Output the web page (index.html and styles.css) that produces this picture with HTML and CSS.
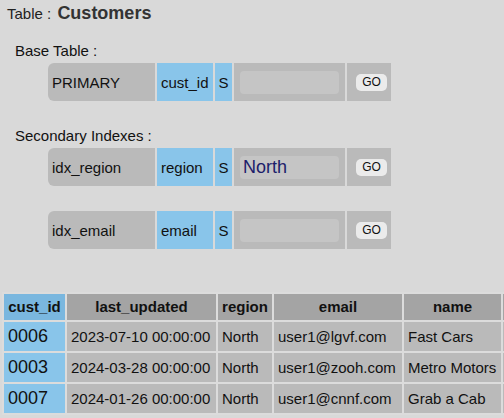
FILE: index.html
```html
<!DOCTYPE html>
<html>
<head>
<meta charset="utf-8">
<link rel="stylesheet" href="styles.css">
</head>
<body>
<div class="title">Table : <b class="tname">Customers</b></div>

<div class="label label-base">Base Table :</div>
<div class="idx-row first">
  <div class="c-name">PRIMARY</div>
  <div class="c-key">cust_id</div>
  <div class="c-type">S</div>
  <div class="c-input"><input class="field" type="text" value=""></div>
  <div class="c-go"><button class="go">GO</button></div>
</div>

<div class="label label-sec">Secondary Indexes :</div>
<div class="idx-row first">
  <div class="c-name">idx_region</div>
  <div class="c-key">region</div>
  <div class="c-type">S</div>
  <div class="c-input"><input class="field" type="text" value="North"></div>
  <div class="c-go"><button class="go">GO</button></div>
</div>
<div class="idx-row second">
  <div class="c-name">idx_email</div>
  <div class="c-key">email</div>
  <div class="c-type">S</div>
  <div class="c-input"><input class="field" type="text" value=""></div>
  <div class="c-go"><button class="go">GO</button></div>
</div>

<div class="grid-wrap">
<table class="grid">
  <thead>
    <tr>
      <th class="k w-id">cust_id</th>
      <th class="w-date">last_updated</th>
      <th class="w-region">region</th>
      <th class="w-email">email</th>
      <th class="w-name">name</th>
      <th class="w-extra"></th>
    </tr>
  </thead>
  <tbody>
    <tr>
      <td class="k">0006</td>
      <td class="d">2023-07-10 00:00:00</td>
      <td>North</td>
      <td>user1@lgvf.com</td>
      <td>Fast Cars</td>
      <td></td>
    </tr>
    <tr>
      <td class="k">0003</td>
      <td class="d">2024-03-28 00:00:00</td>
      <td>North</td>
      <td>user1@zooh.com</td>
      <td>Metro Motors</td>
      <td></td>
    </tr>
    <tr>
      <td class="k">0007</td>
      <td class="d">2024-01-26 00:00:00</td>
      <td>North</td>
      <td>user1@cnnf.com</td>
      <td>Grab a Cab</td>
      <td></td>
    </tr>
  </tbody>
</table>
</div>
</body>
</html>
```

FILE: styles.css
```css
html, body {
  margin: 0;
  padding: 0;
  background: #d9d9d9;
  overflow: hidden;
}

body {
  font-family: "Liberation Sans", Arial, sans-serif;
  font-size: 15px;
  color: #111;
}

.title {
  padding: 2px 0 0 7px;
  line-height: 22px;
  font-size: 15px;
  color: #222;
}

.tname {
  font-size: 18px;
  margin-left: 2px;
  color: #333;
}

.label {
  padding-left: 15px;
  line-height: 18px;
  height: 18px;
}

.label-base {
  margin-top: 17px;
}

.label-sec {
  margin-top: 26px;
}

.idx-row {
  display: flex;
  gap: 2px;
  height: 38px;
  margin-left: 48px;
  margin-top: 3px;
}

.idx-row.second {
  margin-top: 25px;
}

.idx-row > div {
  display: flex;
  align-items: center;
  box-sizing: border-box;
}

.c-name {
  width: 107px;
  background: #bababa;
  border-radius: 6px 0 0 6px;
  padding-left: 4px;
}

.c-key {
  width: 56px;
  background: #89c5ea;
  padding-left: 4px;
}

.c-type {
  width: 17px;
  background: #89c5ea;
  justify-content: center;
}

.c-input {
  width: 111px;
  background: #bababa;
  padding-left: 6px;
}

.field {
  width: 99px;
  height: 23px;
  box-sizing: border-box;
  border: 0;
  border-radius: 4px;
  background: #c5c5c5;
  padding: 0 3px;
  margin: 0;
  font-family: "Liberation Sans", Arial, sans-serif;
  font-size: 18px;
  color: #1d1d6b;
  outline: none;
}

.c-go {
  width: 44px;
  background: #bababa;
  padding-left: 9px;
}

.go {
  width: 31px;
  height: 17px;
  padding: 0;
  margin: 0;
  border: 0;
  border-radius: 5px;
  background: #ebebeb;
  font-family: "Liberation Sans", Arial, sans-serif;
  font-size: 12px;
  color: #111;
  line-height: 17px;
}

.grid-wrap {
  margin-top: 43px;
  padding-left: 2px;
  overflow: hidden;
}

.grid {
  width: max-content;
  border-collapse: separate;
  border-spacing: 2px;
  white-space: nowrap;
  font-size: 15px;
  background: #dcdcdc;
}

.grid th {
  background: #a4a4a4;
  font-weight: bold;
  padding: 4px 4px;
  line-height: 18px;
  text-align: center;
}

.grid th.k {
  background: #7ab7df;
}

.grid td {
  background: #bababa;
  padding: 4px 4px;
  text-align: left;
  vertical-align: middle;
}

.grid td.k {
  background: #89c5ea;
  font-size: 18px;
}

.grid td.d {
  font-size: 15px;
}

.w-id { width: 53px; }
.w-date { width: 141px; }
.w-region { width: 46px; }
.w-email { width: 120px; }
.w-name { width: 89px; }
.w-extra { width: 80px; }
```
